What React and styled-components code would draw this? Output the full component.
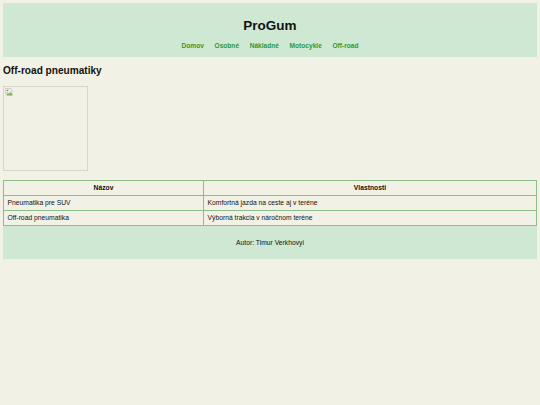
import React from "react";
import styled, { createGlobalStyle } from "styled-components";

const GlobalStyle = createGlobalStyle`
  html, body {
    margin: 0;
    padding: 0;
    background: #f2f1e6;
  }
  body {
    padding: 3px;
    font-family: "Liberation Sans", Arial, sans-serif;
    color: #111;
  }
`;

const Header = styled.header`
  background: #cfe8d4;
  padding: 15px 0 8px;
  text-align: center;
`;

const Title = styled.h1`
  margin: 0 0 8px;
  font-size: 13.5px;
  line-height: 15.5px;
  font-weight: bold;
  color: #111;
`;

const Nav = styled.nav`
  display: flex;
  justify-content: center;
  gap: 10.6px;
`;

const NavLink = styled.a`
  font-size: 6.6px;
  line-height: 7.6px;
  font-weight: bold;
  color: #2f9a2f;
  text-decoration: none;
`;

const Main = styled.main`
  padding-top: 8px;
`;

const Heading = styled.h2`
  margin: 0 0 9px;
  font-size: 10.1px;
  line-height: 11.5px;
  font-weight: bold;
  color: #111;
`;

const ImageBox = styled.div`
  box-sizing: border-box;
  width: 85px;
  height: 85px;
  border: 1px solid #d6d6c9;
  padding: 1px;
  margin-bottom: 9px;

  svg {
    display: block;
  }
`;

const Table = styled.table`
  width: 100%;
  border-collapse: collapse;
  font-size: 6.75px;
`;

const Cell = styled.td`
  border: 1px solid #8dbd88;
  height: 14px;
  padding: 0 3.5px;
  text-align: ${(p) => (p.$head ? "center" : "left")};
  font-weight: ${(p) => (p.$head ? "bold" : "normal")};
  width: ${(p) => p.$w || "auto"};
  color: #111;
`;

const Footer = styled.footer`
  background: #cfe8d4;
  height: 33px;
  display: flex;
  align-items: center;
  justify-content: center;
  font-size: 6.75px;
  color: #111;
`;

function BrokenImage() {
  return (
    <svg width="8" height="8" viewBox="0 0 16 16">
      <path d="M1 1h10l4 4v3l-3 2-2-2-3 3-2-2-4 3z" fill="#e9ede6" stroke="#aab3ad" strokeWidth="1" />
      <path d="M3 13l3-3 2 2 3-3 4 3v3H3z" fill="#7ab35b" />
      <circle cx="5" cy="5" r="1.6" fill="#d9554d" />
    </svg>
  );
}

const links = ["Domov", "Osobné", "Nákladné", "Motocykle", "Off-road"];

const rows = [
  ["Pneumatika pre SUV", "Komfortná jazda na ceste aj v teréne"],
  ["Off-road pneumatika", "Výborná trakcia v náročnom teréne"],
];

export default function App() {
  return (
    <>
      <GlobalStyle />
      <Header>
        <Title>ProGum</Title>
        <Nav>
          {links.map((l) => (
            <NavLink key={l} href="#">
              {l}
            </NavLink>
          ))}
        </Nav>
      </Header>
      <Main>
        <Heading>Off-road pneumatiky</Heading>
        <ImageBox>
          <BrokenImage />
        </ImageBox>
        <Table>
          <thead>
            <tr>
              <Cell as="th" $head $w="192px">Názov</Cell>
              <Cell as="th" $head>Vlastnosti</Cell>
            </tr>
          </thead>
          <tbody>
            {rows.map((r) => (
              <tr key={r[0]}>
                <Cell>{r[0]}</Cell>
                <Cell>{r[1]}</Cell>
              </tr>
            ))}
          </tbody>
        </Table>
      </Main>
      <Footer>Autor: Timur Verkhovyi</Footer>
    </>
  );
}
